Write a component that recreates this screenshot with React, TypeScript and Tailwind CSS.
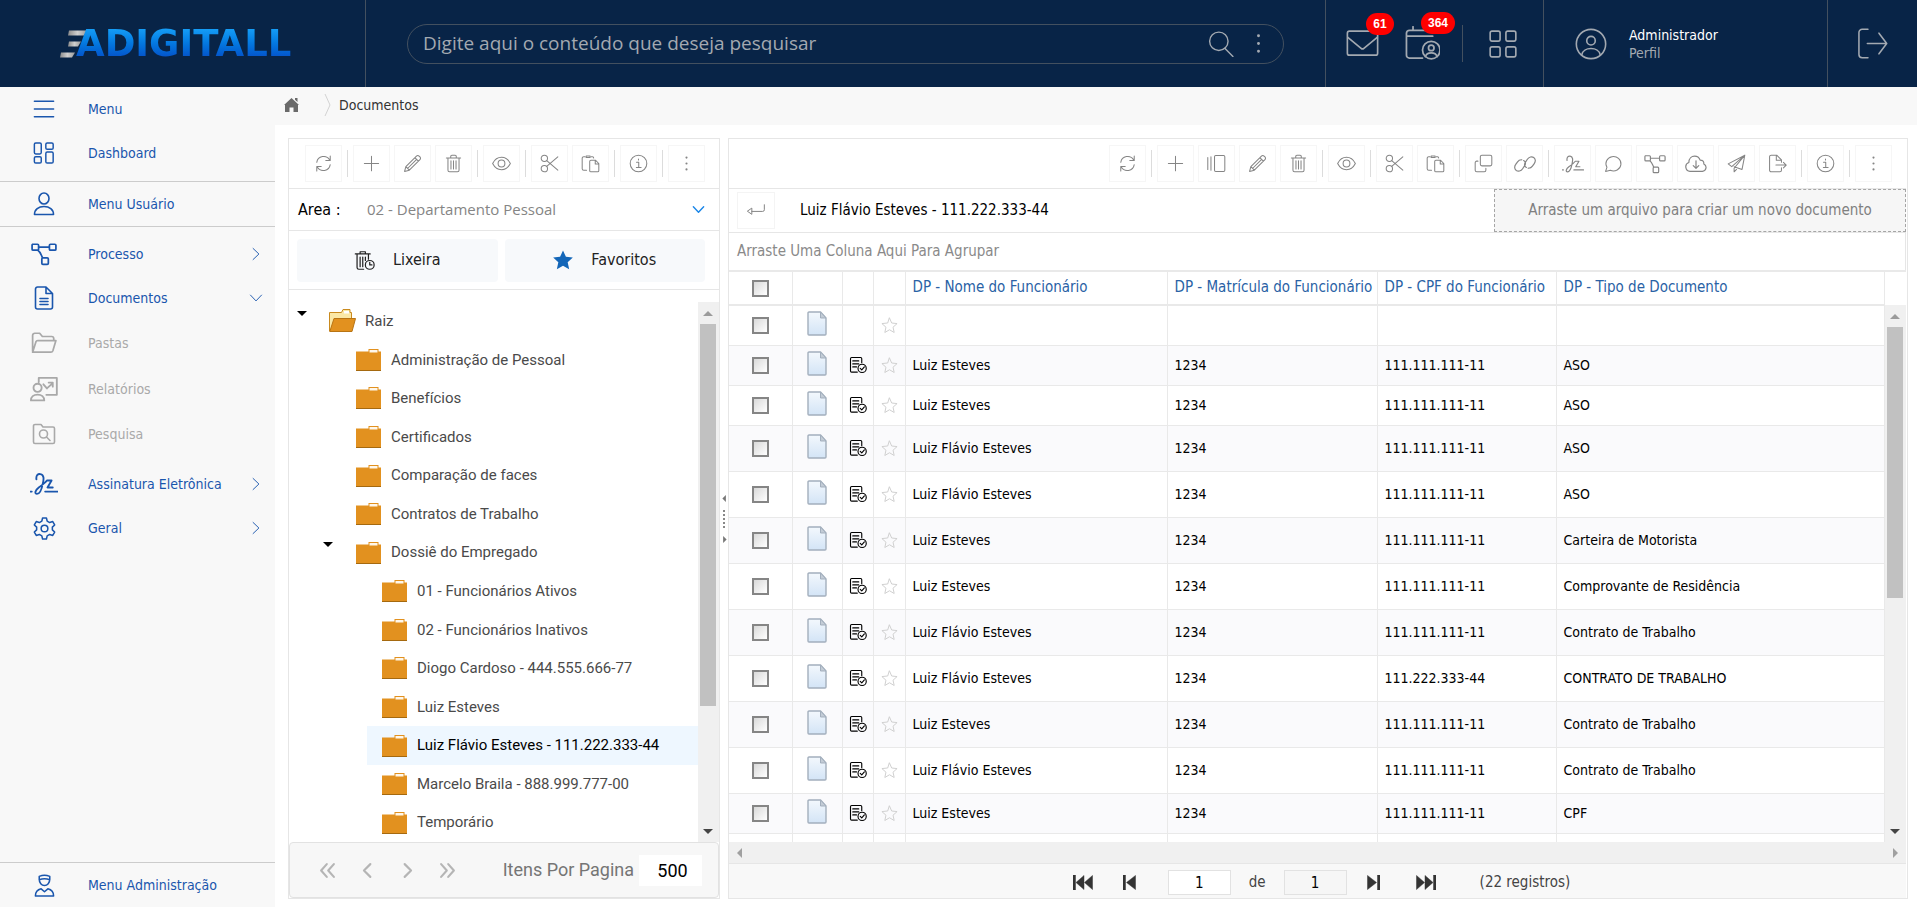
import { useState } from 'react';
import type { ReactNode } from 'react';

const FONT = "font-['DejaVu_Sans_Condensed','DejaVu_Sans',sans-serif]";

// All line icons share a 24x24 box
const ICONS: Record<string, ReactNode> = {
  refresh: <path d="M3.5 10.5a8.8 8.8 0 0 1 16.3-3M20.5 13.5a8.8 8.8 0 0 1-16.3 3M20.5 2.5v5.6h-5.6M3.5 21.500v-5.600h5.600" />,
  plus: <path d="M12 3v18M3 12h18" />,
  cards: <><rect x="9.500" y="2" width="13" height="20" rx="1.500" /><path d="M1 4.500v15M5 3.500v17" /></>,
  pencil: <path d="M2 22l1.600-6L17 2.600a2.300 2.300 0 0 1 3.300 0l1.100 1.100a2.300 2.300 0 0 1 0 3.300L8 20.400 2 22zM3.600 16L8 20.400M15 4.600L19.400 9M6 18l10.600-10.600" />,
  trash: <path d="M3 5h18M5 5v15.500a2 2 0 0 0 2 2h10a2 2 0 0 0 2-2V5M8.500 5V3a1.500 1.500 0 0 1 1.500-1.500h4a1.500 1.500 0 0 1 1.500 1.500v2M8.800 8.500v10.500M12 8.500v10.500M15.200 8.500v10.500" />,
  eye: <><path d="M.8 12C3.500 6.800 7.400 4.200 12 4.200S20.500 6.800 23.200 12C20.500 17.200 16.600 19.800 12 19.800S3.500 17.200.8 12z" /><circle cx="12" cy="12" r="4.300" /></>,
  scissors: <><circle cx="5.500" cy="5.500" r="4" /><circle cx="5.500" cy="18.500" r="4" /><path d="M8.500 8.500L22.500 20.500M8.500 15.500L22.500 3.500" /></>,
  paste: <path d="M5 3.500H3.500A2 2 0 0 0 1.500 5.500v13a2 2 0 0 0 2 2h3.500M13 3.500h1.500a1.500 1.500 0 0 1 1.500 1.500M6.500 4.500v-2h5v2zM12.500 8h6l4 4v9a1.500 1.500 0 0 1-1.500 1.500h-8.500a1.500 1.500 0 0 1-1.500-1.500V9.500A1.500 1.500 0 0 1 12.500 8zM18 8v4.500h4.500" />,
  info: <><circle cx="12" cy="12" r="10.500" /><path d="M9.500 10.500h2.800v6.500M9.300 17h6M12 6.300v1.400" /></>,
  dots: <><circle cx="12" cy="4.500" r=".7" fill="currentColor" /><circle cx="12" cy="12" r=".7" fill="currentColor" /><circle cx="12" cy="19.500" r=".7" fill="currentColor" /></>,
  copy: <path d="M10 1.500h10.500a2 2 0 0 1 2 2v9.500a2 2 0 0 1-2 2H10a2 2 0 0 1-2-2V3.500a2 2 0 0 1 2-2zM5 9H3.500a2 2 0 0 0-2 2v9.500a2 2 0 0 0 2 2h9.500a2 2 0 0 0 2-2V18" />,
  link: <path d="M13.500 15.800c-2-1-2.600-3.300-1.300-5.300l2.400-3.700c1.800-2.700 4.800-3.300 6.900-1.900 2.100 1.500 2.300 4.300.6 6.600l-2 2.900c-1.200 1.700-2.700 2.400-4.600 2.200M10.500 8.200c2 1 2.600 3.300 1.300 5.300l-2.400 3.700c-1.800 2.700-4.800 3.300-6.900 1.900-2.100-1.500-2.300-4.300-.6-6.600l2-2.900c1.200-1.700 2.700-2.400 4.600-2.200" />,
  sign: <path d="M5.500 8C5 4.500 7 3 9 3.500c3 .6 3 4 2 8C10 17 8 20.500 6 20.500c-2.200 0-1.800-3 1.500-5.500C11 12.500 13 11 14.500 9h4l-3.500 6h4.500M.5 18.500h1M13 18.500h10.500" />,
  chat: <path d="M2 22l1.700-5.200A9.500 9 0 1 1 8 20.500z" />,
  flow: <path d="M1.500 3h4.500a1 1 0 0 1 1 1v3.500a1 1 0 0 1-1 1H2a1 1 0 0 1-1-1V4a1 1 0 0 1 .5-1zM18 3h4a1 1 0 0 1 1 1v3.500a1 1 0 0 1-1 1h-4a1 1 0 0 1-1-1V4a1 1 0 0 1 1-1zM11 15.500h4a1 1 0 0 1 1 1v4a1 1 0 0 1-1 1h-4a1 1 0 0 1-1-1v-4a1 1 0 0 1 1-1zM7 5.700h10M6.300 8.500c2.500 1.500 3.200 5 4.400 7" />,
  cloud: <path d="M5.500 20a5 5 0 0 1-1.300-9.700C4.200 6 7 3.500 10.500 3.500c3 0 5 1.600 6 4.200 3 0 4.300 1.800 4 4.300A4.200 4.200 0 0 1 19 20zM12 8.500v8M9 13.700l3 3 3-3" />,
  plane: <path d="M22.500 1.500L1.500 12.500l4.500 3.500L22.500 1.500 9 18v4.500l3-3M22.500 1.500L19 19.500l-10-3.500" />,
  exit: <path d="M17 17.500v3a2 2 0 0 1-2 2H4a2 2 0 0 1-2-2V3.500a2 2 0 0 1 2-2h7l6 6v3M10.500 1.500v6.500H17M10 14h13M19.500 10.500L23 14l-3.500 3.500" />,
  menu: <path d="M1.500 3.500h21M1.500 12h21M1.500 20.500h21" />,
  dash: <><rect x="1.500" y="1" width="7.500" height="12" rx="1.500" /><rect x="1.500" y="16" width="7.500" height="7" rx="1.500" /><rect x="14" y="1" width="8" height="7" rx="1.500" /><rect x="14" y="11" width="8" height="12" rx="1.500" /></>,
  user: <><ellipse cx="12" cy="6.500" rx="5" ry="5.500" /><path d="M2.500 22.500c0-5 4-8 9.500-8s9.500 3 9.500 8z" /></>,
  doc: <path d="M14 1H5.500a2 2 0 0 0-2 2v18a2 2 0 0 0 2 2h13a2 2 0 0 0 2-2V7.500zM14 1v6.500h6.500M8 12.500h8M8 15.500h8M8 18.500h8" />,
  folder: <path d="M1.500 19.500V5a2 2 0 0 1 2-2h4.500l2.500 3H19a2 2 0 0 1 2 2v1.500M1.500 20.500l3-9.500a2 2 0 0 1 1.800-1.300H23l-2.800 9.500a2 2 0 0 1-1.900 1.300z" />,
  report: <path d="M7.500 6V2.500h15.500v14.500h-9M6.500 7.500a3.500 3.500 0 1 1 0 7 3.500 3.500 0 0 1 0-7zM.8 21.800c0-3 2.200-5 5.700-5s5.700 2 5.700 5zM11.500 8l3 3.500 5-4.500M16 6.500h3.500v3.500" />,
  search: <><path d="M1.500 20V4a1.500 1.500 0 0 1 1.500-1.500h6l2 2.500h10a1.500 1.500 0 0 1 1.500 1.500V20a1.500 1.500 0 0 1-1.500 1.500H3A1.500 1.500 0 0 1 1.500 20z" /><circle cx="11.500" cy="12" r="4" /><path d="M14.500 15l3.500 3.500" /></>,
  gear: <><path d="M10 1h4l.8 3.300 2.600 1.500 3.200-1 2 3.500-2.400 2.300v2.800l2.400 2.300-2 3.500-3.200-1-2.600 1.500L14 23h-4l-.8-3.300-2.600-1.500-3.200 1-2-3.500 2.400-2.300v-2.800L1.400 8.300l2-3.500 3.200 1 2.600-1.500z" /><circle cx="12" cy="12" r="3.500" /></>,
  admin: <><path d="M6.500 5.500V2.500q5.500-2.500 11 0v3a5.500 6.500 0 0 1-11 0zM6.500 6q5.500-2 11 0" /><path d="M2.500 23c0-4.500 2-6.500 6-7.500l3.500 3 3.500-3c4 1 6 3 6 7.500z" /></>,
  right: <path d="M7 2.500l10 9.500-10 9.500" />,
  down: <path d="M2.500 7l9.500 10 9.500-10" />,
  magnifier: <><circle cx="10" cy="9.500" r="8.500" /><path d="M15.500 16l7.500 7.500" /></>,
  mail: <><rect x="1" y="3" width="22" height="17.500" rx="1.500" /><path d="M1.300 7.500L11 15.500a1.500 1.500 0 0 0 2 0l9.700-8" /></>,
  agenda: <><path d="M12 22H3a2 2 0 0 1-2-2V5a2 2 0 0 1 2-2h16M1 7h18M5.500 3V.5" /><circle cx="18" cy="16.500" r="6" /><circle cx="18" cy="15" r="1.900" /><path d="M14 21c1-3.500 7-3.500 8 0" /></>,
  grid: <><rect x="1" y="1" width="8.500" height="8.500" rx="1.500" /><rect x="14.500" y="1" width="8.500" height="8.500" rx="1.500" /><rect x="1" y="14.500" width="8.500" height="8.500" rx="1.500" /><rect x="14.500" y="14.500" width="8.500" height="8.500" rx="1.500" /></>,
  profile: <><circle cx="12" cy="12" r="11" /><circle cx="12" cy="9.500" r="3.200" /><path d="M5 20.300c1.200-6.500 12.800-6.500 14 0" /></>,
  logout: <path d="M8.500 1H4a2.500 2.500 0 0 0-2.500 2.500v17A2.500 2.500 0 0 0 4 23h4.500M8 12h15M17 4l6 8-6 8" />,
  back: <path d="M22 4.500v6a2 2 0 0 1-2 2H7M7 9v7l-5-3.500z" />,
  trashClock: <><path d="M1.500 4.500h17M3.500 4.500V20a2 2 0 0 0 2 2H11M16.500 4.500v6M7 4.500V2h6v2.500M7 8v11M10 8v11M13 8v4" /><circle cx="18" cy="17" r="5" /><path d="M18 14v3h2.500" /></>,
  signed: <><path d="M11 21.500H3.500a1.500 1.500 0 0 1-1.500-1.500V3.500A1.500 1.500 0 0 1 3.500 2h12A1.500 1.500 0 0 1 17 3.500V9M5 6.500h8M5 10.500h8M5 14.500h5" /><circle cx="17.500" cy="16.500" r="5.500" /><path d="M15 16.500l2 2 3.500-4" /></>,
  star: <path d="M12 1.500l3.100 7 7.600.8-5.700 5.100 1.600 7.500L12 18l-6.600 3.900L7 14.400 1.300 9.300l7.600-.8z" />,
  first: <path d="M11 3L3 12l8 9M21 3l-8 9 8 9" />,
  prev: <path d="M16 3l-9 9 9 9" />,
  next: <path d="M8 3l9 9-9 9" />,
  last: <path d="M3 3l8 9-8 9M13 3l8 9-8 9" />,
};

function Icon({ name, size = 20, stroke = 1.4 }: { name: string; size?: number; stroke?: number }) {
  return (
    <svg width={size} height={size} viewBox="0 0 24 24" fill="none" stroke="currentColor" strokeWidth={stroke} strokeLinejoin="round" strokeLinecap="round" className="shrink-0" aria-hidden="true">
      {ICONS[name]}
    </svg>
  );
}

const LEFT_TOOLS = ['refresh', '|', 'plus', 'pencil', 'trash', '|', 'eye', '|', 'scissors', 'paste', '|', 'info', '|', 'dots'];
const RIGHT_TOOLS = [
  'refresh', '|', 'plus', 'cards', 'pencil', 'trash', '|', 'eye', '|', 'scissors', 'paste', '|', 'copy', 'link', '|',
  'sign', 'chat', 'flow', 'cloud', 'plane', 'exit', '|', 'info', '|', 'dots',
];

const TREE = [
  { label: 'Raiz', depth: 0, open: true },
  { label: 'Administração de Pessoal', depth: 1 },
  { label: 'Benefícios', depth: 1 },
  { label: 'Certificados', depth: 1 },
  { label: 'Comparação de faces', depth: 1 },
  { label: 'Contratos de Trabalho', depth: 1 },
  { label: 'Dossiê do Empregado', depth: 1, open: true },
  { label: '01 - Funcionários Ativos', depth: 2 },
  { label: '02 - Funcionários Inativos', depth: 2 },
  { label: 'Diogo Cardoso - 444.555.666-77', depth: 2 },
  { label: 'Luiz Esteves', depth: 2 },
  { label: 'Luiz Flávio Esteves - 111.222.333-44', depth: 2 },
  { label: 'Marcelo Braila - 888.999.777-00', depth: 2 },
  { label: 'Temporário', depth: 2 },
];

const INDENT = ['pl-2', 'pl-[34px]', 'pl-[60px]'];

const ROWS = [
  { name: '', reg: '', cpf: '', type: '', short: true },
  { name: 'Luiz Esteves', reg: '1234', cpf: '111.111.111-11', type: 'ASO', short: true },
  { name: 'Luiz Esteves', reg: '1234', cpf: '111.111.111-11', type: 'ASO', short: true },
  { name: 'Luiz Flávio Esteves', reg: '1234', cpf: '111.111.111-11', type: 'ASO' },
  { name: 'Luiz Flávio Esteves', reg: '1234', cpf: '111.111.111-11', type: 'ASO' },
  { name: 'Luiz Esteves', reg: '1234', cpf: '111.111.111-11', type: 'Carteira de Motorista' },
  { name: 'Luiz Esteves', reg: '1234', cpf: '111.111.111-11', type: 'Comprovante de Residência' },
  { name: 'Luiz Flávio Esteves', reg: '1234', cpf: '111.111.111-11', type: 'Contrato de Trabalho' },
  { name: 'Luiz Flávio Esteves', reg: '1234', cpf: '111.222.333-44', type: 'CONTRATO DE TRABALHO' },
  { name: 'Luiz Esteves', reg: '1234', cpf: '111.111.111-11', type: 'Contrato de Trabalho' },
  { name: 'Luiz Flávio Esteves', reg: '1234', cpf: '111.111.111-11', type: 'Contrato de Trabalho' },
  { name: 'Luiz Esteves', reg: '1234', cpf: '111.111.111-11', type: 'CPF', short: true },
];

function Toolbar({ tools }: { tools: string[] }) {
  return (
    <div className="flex h-[50px] shrink-0 items-center justify-end gap-1 border-b border-[#e6e6e6] pr-[14px]">
      {tools.map((t, i) =>
        t === '|' ? (
          <span key={i} className="mx-px h-[27px] w-px bg-[#dcdcdc]" />
        ) : (
          <button key={i} aria-label={t} className="flex h-[37px] w-[37px] items-center justify-center border border-[#f6f6f6] text-[#858585] hover:bg-gray-100">
            <Icon name={t} size={t === 'flow' || t === 'sign' || t === 'cloud' || t === 'link' ? 22 : 19} stroke={1.3} />
          </button>
        ),
      )}
    </div>
  );
}

function NavItem({ icon, label, size = 22, arrow, muted, className }: { icon: string; label: string; size?: number; arrow?: string; muted?: boolean; className: string }) {
  return (
    <a href="#" className={`flex items-center pr-3 ${muted ? 'text-[#a9a9a9]' : 'text-[#1a56ad]'} ${className}`}>
      <span className="flex w-[88px] justify-center">
        <Icon name={icon} size={size} stroke={1.6} />
      </span>
      <span className="flex-1 text-sm">{label}</span>
      {arrow && <Icon name={arrow} size={14} stroke={1.6} />}
    </a>
  );
}

function Folder({ open }: { open?: boolean }) {
  return (
    <svg width="27" height="24" viewBox="0 0 27 24" className="shrink-0" aria-hidden="true">
      {open ? (
        <>
          <path d="M.5 3.500h12l1.500-3h7v3h1.500V22H.5z" fill="#fbe8a6" stroke="#c98a1e" />
          <path d="M15 2h5v2.500h-5z" fill="#fff" />
          <path d="M.8 22.500L5 9.500h21.500L23 22.500z" fill="#e2911f" stroke="#b87414" />
        </>
      ) : (
        <>
          <path d="M1 3.500h12.500V1h10v2.500H26V23H1z" fill="#e2911f" />
          <path d="M14.500 2h8v2.500h-8z" fill="#fff7ea" />
          <path d="M1 22.500h25" stroke="#a5690f" />
        </>
      )}
    </svg>
  );
}

function FileIcon() {
  return (
    <svg width="20" height="25" viewBox="0 0 20 25" className="mx-auto" aria-hidden="true">
      <defs>
        <linearGradient id="page" x1="0" y1="0" x2="0" y2="1">
          <stop offset="0" stopColor="#f3f8fd" />
          <stop offset="1" stopColor="#d3e4f6" />
        </linearGradient>
      </defs>
      <path d="M2 1h11.500l5.500 6v16a1 1 0 0 1-1 1H2a1 1 0 0 1-1-1V2a1 1 0 0 1 1-1z" fill="url(#page)" stroke="#a3afbd" strokeWidth="1.400" />
      <path d="M13.500 1v6H19z" fill="#c3ccd6" stroke="#a3afbd" />
    </svg>
  );
}

function Triangle({ dir, className = '' }: { dir: 'up' | 'down' | 'left' | 'right'; className?: string }) {
  const points = { up: '0,8 5,3 10,8', down: '0,3 5,8 10,3', left: '7,0 2,5 7,10', right: '3,0 8,5 3,10' };
  return (
    <svg width="10" height="10" viewBox="0 0 10 10" className={className} aria-hidden="true">
      <polygon points={points[dir]} fill="currentColor" />
    </svg>
  );
}

// The thumb covers a share of the track, the rest stays empty
function ScrollBar({ ratio }: { ratio: number }) {
  return (
    <div className="flex min-h-0 w-[21px] flex-1 flex-col items-center bg-[#f0f0f0] pr-px">
      <Triangle dir="up" className="my-[6px] shrink-0 text-[#9b9b9b]" />
      <div className="min-h-0 w-full flex-1 px-[2px]">
        <div className="bg-[#c1c1c1]" style={{ height: `${ratio * 100}%` }} />
      </div>
      <Triangle dir="down" className="my-[6px] shrink-0 text-[#444]" />
    </div>
  );
}

function Check({ label }: { label: string }) {
  return (
    <input
      type="checkbox"
      aria-label={label}
      className="mx-auto block h-[17px] w-[17px] appearance-none border-2 border-[#858585] bg-linear-to-br from-[#d9d9d9] to-white checked:bg-blue-600"
    />
  );
}

function PagerIcon({ double, flip }: { double?: boolean; flip?: boolean }) {
  return (
    <svg width={double ? 20 : 13} height="15" viewBox={double ? '0 0 20 17' : '0 0 13 17'} preserveAspectRatio="none" className={flip ? 'rotate-180' : ''} aria-hidden="true">
      <path d={double ? 'M0 0h2.500v17H0zM11 .5v16L3 8.500zM19.500.5v16l-8-8z' : 'M0 0h2.500v17H0zM12.500.5v16L3.500 8.500z'} fill="#333" stroke="#333" strokeWidth=".5" />
    </svg>
  );
}

function Logo() {
  return (
    <div className="flex items-center">
      <svg width="28" height="28" viewBox="0 0 28 28" className="-mr-3" aria-hidden="true">
        <defs>
          <linearGradient id="silver" x1="0" y1="0" x2="1" y2="0">
            <stop offset="0" stopColor="#8b8b8b" />
            <stop offset=".5" stopColor="#cfcfcf" />
            <stop offset="1" stopColor="#9a9a9a" />
          </linearGradient>
        </defs>
        <path d="M9 .5h18l-3 5H8z" fill="url(#silver)" />
        <path d="M9 11.500h12l-3 5H8z" fill="url(#silver)" />
        <path d="M1 22.500h14l-3 5H0z" fill="url(#silver)" />
      </svg>
      <span className="bg-linear-to-b from-[#149bf5] from-20% to-[#0650c8] to-80% bg-clip-text font-['DejaVu_Sans',sans-serif] text-[37px] leading-[48px] font-bold text-transparent">ADIGITALL</span>
    </div>
  );
}

export default function App() {
  const [selected, setSelected] = useState('Luiz Flávio Esteves - 111.222.333-44');

  return (
    <div className={`flex h-screen flex-col overflow-hidden bg-white text-black ${FONT}`}>
      <header className="flex h-[87px] shrink-0 bg-[#082447] text-[#a3a9b1]">
        <div className="flex w-[366px] items-center border-r border-[#43505f] pl-[60px]">
          <Logo />
        </div>
        <div className="flex flex-1 items-center px-[41px]">
          <div className="flex h-10 flex-1 items-center rounded-full border border-[#43505f] pr-3 pl-[15px]">
            <input
              aria-label="Pesquisar"
              placeholder="Digite aqui o conteúdo que deseja pesquisar"
              className="min-w-0 flex-1 bg-transparent font-['Open_Sans',sans-serif] text-[19px] outline-none placeholder:text-[#a3a9b1]"
            />
            <button aria-label="Buscar" className="mr-3"><Icon name="magnifier" size={26} stroke={1.3} /></button>
            <button aria-label="Opções"><Icon name="dots" size={25} /></button>
          </div>
        </div>
        <div className="flex w-[219px] items-center gap-[26px] border-x border-[#43505f] pl-5">
          <button aria-label="Mensagens" className="relative">
            <Icon name="mail" size={33} stroke={1.2} />
            <span className="absolute -top-[14px] left-5 flex h-[22px] w-7 items-center justify-center rounded-full bg-[#fe0000] font-['Liberation_Sans',sans-serif] text-xs font-bold text-white">61</span>
          </button>
          <button aria-label="Agenda" className="relative">
            <Icon name="agenda" size={35} stroke={1.2} />
            <span className="absolute -top-[14px] left-[16px] flex h-[22px] w-[34px] items-center justify-center rounded-full bg-[#fe0000] font-['Liberation_Sans',sans-serif] text-xs font-bold text-white">364</span>
          </button>
          <span className="-ml-1 h-[37px] w-px bg-[#43505f]" />
          <button aria-label="Aplicativos"><Icon name="grid" size={28} stroke={1.4} /></button>
        </div>
        <div className="flex w-[284px] items-center gap-[22px] border-r border-[#43505f] pl-[31px]">
          <Icon name="profile" size={32} stroke={1.2} />
          <div className="text-sm leading-[18px]">
            <div className="text-white">Administrador</div>
            <div>Perfil</div>
          </div>
        </div>
        <div className="flex w-[89px] items-center justify-center">
          <button aria-label="Sair"><Icon name="logout" size={31} stroke={1.2} /></button>
        </div>
      </header>

      <div className="flex min-h-0 flex-1">
        <nav className="flex w-[275px] shrink-0 flex-col bg-[#f8f8f8]">
          <NavItem icon="menu" label="Menu" className="h-[43px]" />
          <NavItem icon="dash" label="Dashboard" className="mb-[5px] h-[46px]" />
          <NavItem icon="user" label="Menu Usuário" size={24} className="h-[46px] border-y border-[#cccccc]" />
          <NavItem icon="flow" label="Processo" size={26} arrow="right" className="mt-[5px] h-11" />
          <NavItem icon="doc" label="Documentos" size={24} arrow="down" className="h-11" />
          <NavItem icon="folder" label="Pastas" size={26} muted className="h-[46px]" />
          <NavItem icon="report" label="Relatórios" size={28} muted className="h-[45px]" />
          <NavItem icon="search" label="Pesquisa" size={24} muted className="h-[46px]" />
          <NavItem icon="sign" label="Assinatura Eletrônica" size={28} arrow="right" className="mt-[5px] h-11" />
          <NavItem icon="gear" label="Geral" size={23} arrow="right" className="h-11" />
          <NavItem icon="admin" label="Menu Administração" size={23} className="mt-auto h-[45px] border-t border-[#cccccc]" />
        </nav>

        <div className="flex min-w-0 flex-1 flex-col">
          <div className="flex h-[38px] shrink-0 items-center bg-[#f8f8f8] pb-[2px] pl-2 text-sm text-[#333]">
            <a href="#" aria-label="Início">
              <svg width="17" height="16" viewBox="0 0 17 16" fill="#6a6a6a" aria-hidden="true">
                <path d="M8.500 1L16 8h-1v7h-4.500v-4.500h-4V15H2V8H1zM12 1h2.500v4L12 2.800z" />
              </svg>
            </a>
            <svg width="7" height="24" viewBox="0 0 7 24" fill="none" stroke="#d3d3d3" className="mr-2 ml-6" aria-hidden="true">
              <path d="M1 1l5 11-5 11" />
            </svg>
            <span>Documentos</span>
          </div>

          <div className="flex min-h-0 flex-1 pt-[13px] pr-[9px] pb-2 pl-[13px]">
            {/* Folder tree */}
            <section className="flex w-[432px] shrink-0 flex-col border border-[#e6e6e6]">
              <Toolbar tools={LEFT_TOOLS} />
              <div className="flex h-[42px] shrink-0 items-center border-b border-[#e6e6e6] pl-[9px]">
                <label htmlFor="area" className="w-[69px] text-base">Area :</label>
                <div className="relative flex flex-1 items-center">
                  <select id="area" className="w-full appearance-none bg-transparent font-['Open_Sans',sans-serif] text-[15px] text-[#858585] outline-none">
                    <option>02 - Departamento Pessoal</option>
                  </select>
                  <span className="pointer-events-none absolute right-[14px] text-[#1a86e8]"><Icon name="down" size={13} stroke={2.6} /></span>
                </div>
              </div>
              <div className="flex h-[59px] shrink-0 items-center gap-[7px] border-b border-[#e6e6e6] pr-[14px] pl-2 text-base text-[#222]">
                <button className="flex h-[43px] flex-1 items-center justify-center gap-[18px] rounded bg-[#f7f9fb]">
                  <Icon name="trashClock" size={21} />
                  Lixeira
                </button>
                <button className="flex h-[43px] flex-1 items-center justify-center gap-[18px] rounded bg-[#f7f9fb]">
                  <svg width="20" height="20" viewBox="0 0 24 24" fill="#1366b8" aria-hidden="true"><path d="M12 .5l3.500 7.700 8.300.9-6.200 5.600 1.800 8.300L12 18.800 4.600 23l1.800-8.300L.2 9.100l8.300-.9z" /></svg>
                  Favoritos
                </button>
              </div>
              <div className="flex min-h-0 flex-1 pt-3">
                <ul className="grid flex-1 auto-rows-fr font-['Roboto',sans-serif] text-[15px] text-[#4a4a4a]">
                  {TREE.map((node) => (
                    <li key={node.label} className={`flex items-stretch ${INDENT[node.depth]}`}>
                      <span className="w-[18px] shrink-0 pt-[6px] text-black">
                        {node.open && <Triangle dir="down" />}
                      </span>
                      <button
                        onClick={() => setSelected(node.label)}
                        className={`flex flex-1 items-center gap-[9px] pl-[14px] text-left whitespace-nowrap ${selected === node.label ? 'bg-[#eef7ff] text-black' : ''}`}
                      >
                        <Folder open={node.depth === 0} />
                        {node.label}
                      </button>
                    </li>
                  ))}
                </ul>
                <div className="flex"><ScrollBar ratio={0.77} /></div>
              </div>
              <div className="flex h-[56px] shrink-0 items-center rounded border border-[#e2e2e2] bg-[#f7f7f7] pr-4 pl-[29px] font-['Roboto',sans-serif] text-lg text-[#757575]">
                <div className="flex flex-1 gap-[23px] text-[#b5b5b5]">
                  <button aria-label="Primeira página"><Icon name="first" size={17} stroke={3} /></button>
                  <button aria-label="Página anterior"><Icon name="prev" size={17} stroke={3} /></button>
                  <button aria-label="Próxima página"><Icon name="next" size={17} stroke={3} /></button>
                  <button aria-label="Última página"><Icon name="last" size={17} stroke={3} /></button>
                </div>
                <label htmlFor="per-page">Itens Por Pagina</label>
                <input id="per-page" defaultValue="500" className="ml-[5px] h-[31px] w-[63px] bg-white pl-1 text-center text-black outline-none" />
              </div>
            </section>

            <div className="flex w-2 flex-col items-center justify-center gap-2 text-[#777]">
              <Triangle dir="left" className="h-[7px] w-[7px]" />
              <span className="h-[18px] border-l-2 border-dotted border-[#888]" />
              <Triangle dir="right" className="h-[7px] w-[7px]" />
            </div>

            {/* Document list */}
            <section className="flex min-w-0 flex-1 flex-col border border-[#e6e6e6] pr-px">
              <Toolbar tools={RIGHT_TOOLS} />
              <div className="flex h-[44px] shrink-0 items-center border-b border-[#e6e6e6] text-[15px]">
                <button aria-label="Voltar" className="ml-2 flex h-[37px] w-[38px] items-center justify-center border border-[#f4f4f4] text-[#858585]">
                  <Icon name="back" size={20} stroke={1.2} />
                </button>
                <span className="ml-[25px] flex-1">Luiz Flávio Esteves - 111.222.333-44</span>
                <div className="flex h-full w-[412px] items-center justify-center border border-dashed border-[#a5a5a5] bg-[#f6f6f6] text-[#808080]">
                  Arraste um arquivo para criar um novo documento
                </div>
              </div>
              <div className="flex h-[37px] shrink-0 items-center border-r border-[#e6e6e6] pl-2 text-[15px] text-[#8a8a8a]">Arraste Uma Coluna Aqui Para Agrupar</div>
              <div className="flex min-h-0 flex-1 border-t-2 border-[#e9e9e9]">
                <div className="min-w-0 flex-1 overflow-hidden">
                  <table className="w-full table-fixed border-collapse text-left text-sm">
                    <colgroup>
                      <col className="w-[63px]" />
                      <col className="w-[50px]" />
                      <col className="w-[31px]" />
                      <col className="w-[32px]" />
                      <col className="w-[262px]" />
                      <col className="w-[210px]" />
                      <col className="w-[179px]" />
                      <col />
                    </colgroup>
                    <thead>
                      <tr className="h-[33px] border-b-2 border-[#e9e9e9] text-[15px] text-[#2a62a5] *:border-r *:border-[#e9e9e9] *:font-normal">
                        <th><Check label="Selecionar todos" /></th>
                        <th />
                        <th />
                        <th />
                        <th className="pl-[7px] whitespace-nowrap">DP - Nome do Funcionário</th>
                        <th className="pl-[7px] whitespace-nowrap">DP - Matrícula do Funcionário</th>
                        <th className="pl-[7px] whitespace-nowrap">DP - CPF do Funcionário</th>
                        <th className="pl-[7px] whitespace-nowrap">DP - Tipo de Documento</th>
                      </tr>
                    </thead>
                    <tbody>
                      {ROWS.map((row, i) => (
                        <tr key={i} className={`border-b border-[#e9e9e9] *:border-r *:border-[#e9e9e9] ${row.short ? 'h-10' : 'h-[46px]'} ${i % 2 ? 'bg-[#fafafc]' : ''}`}>
                          <td><Check label={`Selecionar linha ${i + 1}`} /></td>
                          <td className="pb-1"><FileIcon /></td>
                          <td><div className="flex justify-center">{row.name && <Icon name="signed" size={18} stroke={1.5} />}</div></td>
                          <td className="text-[#cfcfcf]"><div className="flex justify-center"><Icon name="star" size={17} /></div></td>
                          <td className="pl-[7px]">{row.name}</td>
                          <td className="pl-[7px]">{row.reg}</td>
                          <td className="pl-[7px]">{row.cpf}</td>
                          <td className="pl-[7px]">{row.type}</td>
                        </tr>
                      ))}
                      <tr className="h-10 *:border-r *:border-[#e9e9e9]">
                        <td /><td /><td /><td /><td /><td /><td /><td />
                      </tr>
                    </tbody>
                  </table>
                </div>
                <div className="flex flex-col pt-[33px]"><ScrollBar ratio={0.55} /></div>
              </div>
              <div className="flex h-[21px] shrink-0 items-center justify-between bg-[#f0f0f0] px-[6px] text-[#a0a0a0]">
                <Triangle dir="left" />
                <Triangle dir="right" />
              </div>
              <div className="flex h-[35px] shrink-0 items-center justify-center border-t border-[#e6e6e6] bg-[#f8f8f8] pt-[3px] pl-2 text-[15px] text-[#444]">
                <button aria-label="Primeira"><PagerIcon double /></button>
                <button aria-label="Anterior" className="ml-[30px]"><PagerIcon /></button>
                <input aria-label="Página" defaultValue="1" className="ml-8 h-[25px] w-[63px] border border-[#e2e2e2] bg-white text-center text-black outline-none" />
                <span className="mx-[18px]">de</span>
                <input aria-label="Total de páginas" readOnly value="1" className="mr-5 h-[25px] w-[63px] border border-[#e2e2e2] bg-[#f6f6f6] text-center text-black outline-none" />
                <button aria-label="Próxima"><PagerIcon flip /></button>
                <button aria-label="Última" className="mr-11 ml-9"><PagerIcon double flip /></button>
                <span>(22 registros)</span>
              </div>
            </section>
          </div>
        </div>
      </div>
    </div>
  );
}
